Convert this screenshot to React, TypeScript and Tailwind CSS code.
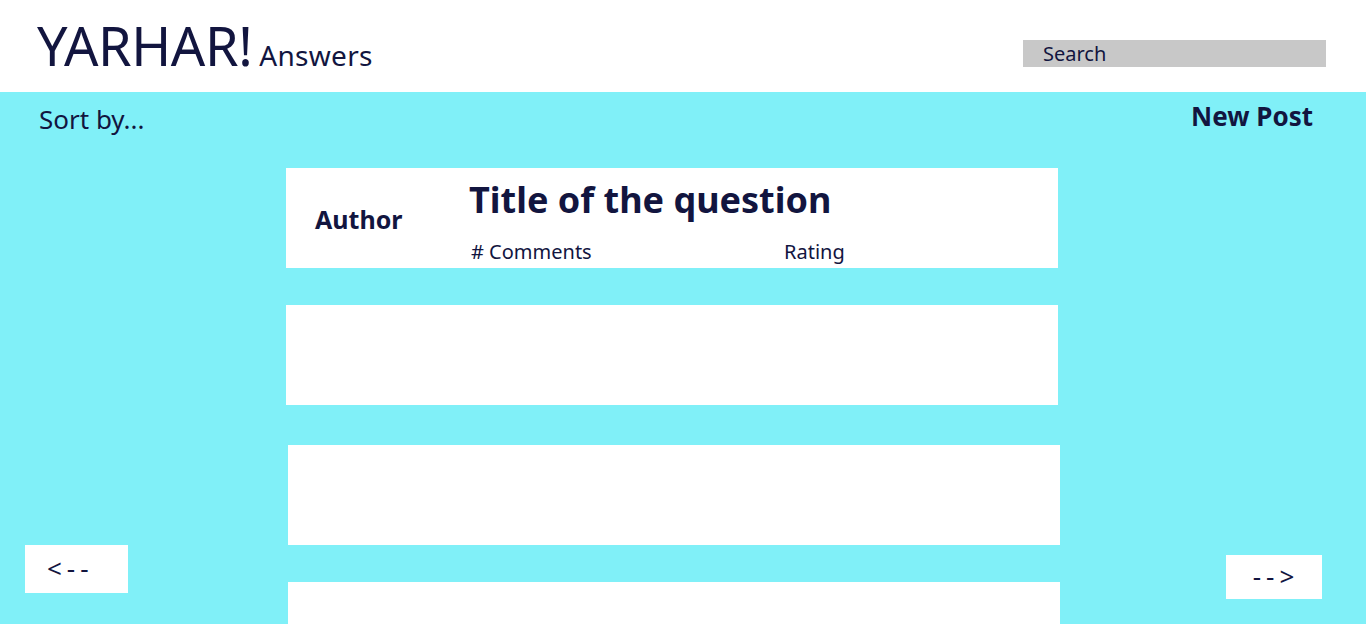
import React from "react";

const font = { fontFamily: '"Noto Sans", "Open Sans", sans-serif' };

function QuestionCard({ shift = false, children }: { shift?: boolean; children?: React.ReactNode }) {
  return <div className={`h-[100px] w-[772px] bg-white ${shift ? "ml-[2px]" : ""}`}>{children}</div>;
}

export default function App() {
  return (
    <div className="h-[624px] w-[1366px] overflow-hidden text-[#12153f]" style={font}>
      {/* header */}
      <header className="flex h-[92px] items-start justify-between bg-white pl-[37px] pr-[40px]">
        <div className="mt-[10px] flex items-baseline gap-[7px]">
          <span className="text-[54px] leading-[70px] tracking-[-0.4px]">YARHAR!</span>
          <span className="text-[28px] leading-[36px] tracking-[0.3px]">Answers</span>
        </div>
        <div className="mt-[40px] flex h-[27px] w-[303px] items-center bg-[#c8c8c8] pl-[20px] text-[20px] leading-none">
          Search
        </div>
      </header>

      {/* body */}
      <main className="h-[532px] bg-[#80f0f8]">
        <div className="flex h-[48px] items-start justify-between pl-[39px] pr-[53px] pt-[8px]">
          <span className="mt-[-1px] text-[26px] leading-[40px]">Sort by...</span>
          <span className="mt-[-4px] text-[26px] font-bold leading-[40px]">New Post</span>
        </div>

        <div className="flex">
          <div className="flex w-[286px] flex-col pl-[25px]">
            <button className="mt-[405px] flex h-[48px] w-[103px] items-center bg-white pb-[2px] pl-[22px] text-[26px] tracking-[5px]">
              &lt;--
            </button>
          </div>

          <div className="mt-[28px] flex flex-col gap-[37px]">
            <QuestionCard>
              <div className="flex h-full">
                <div className="w-[183px] pl-[29px] pt-[36px] text-[25px] font-bold leading-[30px]">Author</div>
                <div className="flex flex-col">
                  <div className="mt-[8px] text-[36px] font-bold leading-[48px]">Title of the question</div>
                  <div className="mt-[16px] flex text-[20px] leading-[24px]">
                    <span className="w-[315px] pl-[2px]">
                      # Comments
                    </span>
                    <span>Rating</span>
                  </div>
                </div>
              </div>
            </QuestionCard>
            <QuestionCard />
            <div className="mt-[3px] flex flex-col gap-[37px]">
              <QuestionCard shift />
              <QuestionCard shift />
            </div>
          </div>

          <div className="flex flex-1 justify-end pr-[44px]">
            <button className="mt-[415px] flex h-[44px] w-[96px] items-center justify-center bg-white pb-[2px] pl-[4px] text-[26px] tracking-[5px]">
              --&gt;
            </button>
          </div>
        </div>
      </main>
    </div>
  );
}
